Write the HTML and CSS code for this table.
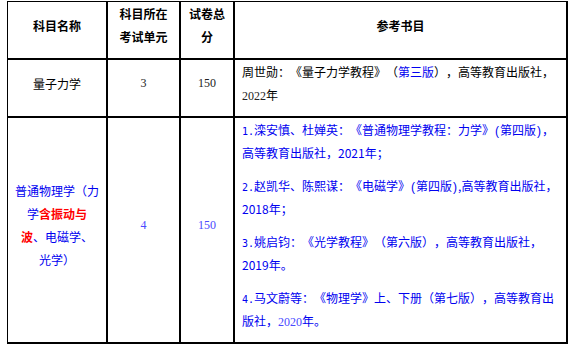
FILE: index.html
```html
<!DOCTYPE html>
<html lang="zh-CN">
<head>
<meta charset="utf-8">
<title>参考书目</title>
<link rel="stylesheet" href="styles.css">
</head>
<body>
<table class="books">
  <colgroup>
    <col class="c-name">
    <col class="c-unit">
    <col class="c-score">
    <col class="c-ref">
  </colgroup>
  <thead>
    <tr>
      <th><p>科目名称</p></th>
      <th><p>科目所在考试单元</p></th>
      <th><p>试卷总分</p></th>
      <th><p>参考书目</p></th>
    </tr>
  </thead>
  <tbody>
    <tr>
      <td class="center"><p>量子力学</p></td>
      <td class="center num"><p>3</p></td>
      <td class="center num"><p>150</p></td>
      <td class="ref"><p>周世勋：《量子力学教程》（<span class="blue">第三版</span>），高等教育出版社，<br><span class="num">2022</span>年</p></td>
    </tr>
    <tr class="blue">
      <td class="center"><p>普通物理学（力<br>学<b class="red">含振动与</b><br><b class="red">波</b>、电磁学、<br>光学）</p></td>
      <td class="center num light"><p>4</p></td>
      <td class="center num light"><p>150</p></td>
      <td class="ref">
        <p><span class="mono">1.</span>滦安慎、杜婵英：《普通物理学教程：力学》<span class="paren">(</span>第四版<span class="paren">)</span>，<br>高等教育出版社，2021年；</p>
        <p><span class="mono">2.</span>赵凯华、陈熙谋：《电磁学》<span class="paren">(</span>第四版<span class="paren">)</span>,高等教育出版社，<br>2018年；</p>
        <p><span class="mono">3.</span>姚启钧：《光学教程》（第六版），高等教育出版社，<br>2019年。</p>
        <p><span class="mono">4.</span>马文蔚等：《物理学》上、下册（第七版），高等教育出<br>版社，<span class="num light">2020</span>年。</p>
      </td>
    </tr>
  </tbody>
</table>
</body>
</html>
```

FILE: styles.css
```css
html, body {
  margin: 0;
  padding: 0;
  background: #fff;
}

body {
  font-family: "Noto Sans CJK SC", "Noto Sans", sans-serif;
  font-size: 12px;
  line-height: 23px;
  color: #000;
  text-spacing-trim: space-all;
}

.books {
  margin: 1px 0 0 7px;
  width: 561px;
  box-sizing: border-box;
  table-layout: fixed;
  border-collapse: separate;
  border-spacing: 0;
  border-left: 1px solid #000;
  border-top: 1px solid #000;
}

.c-name { width: 100px; }
.c-unit { width: 73px; }
.c-score { width: 54px; }
.c-ref { width: 333px; }

.books th,
.books td {
  box-sizing: border-box;
  padding: 0 7px;
  border-right: 2px solid #000;
  border-bottom: 2px solid #000;
  vertical-align: middle;
}

.books th {
  font-weight: bold;
  text-align: center;
}

.books p {
  margin: 0 0 10px;
}

.center {
  text-align: center;
}

.ref {
  text-align: left;
}

.ref p {
  white-space: nowrap;
}

.num {
  font-family: "Liberation Serif", "Noto Sans CJK SC", serif;
  color: #222;
  line-height: 0;
}

.blue {
  color: #0000f0;
}

.light {
  color: #4a4aff;
}

.red {
  color: #ff0000;
  font-weight: bold;
}

.mono {
  font-family: "DejaVu Sans Mono", monospace;
  font-size: 10px;
  line-height: 0;
}

.paren {
  font-family: "Liberation Sans", sans-serif;
  line-height: 0;
  padding: 0 1px;
}
```
